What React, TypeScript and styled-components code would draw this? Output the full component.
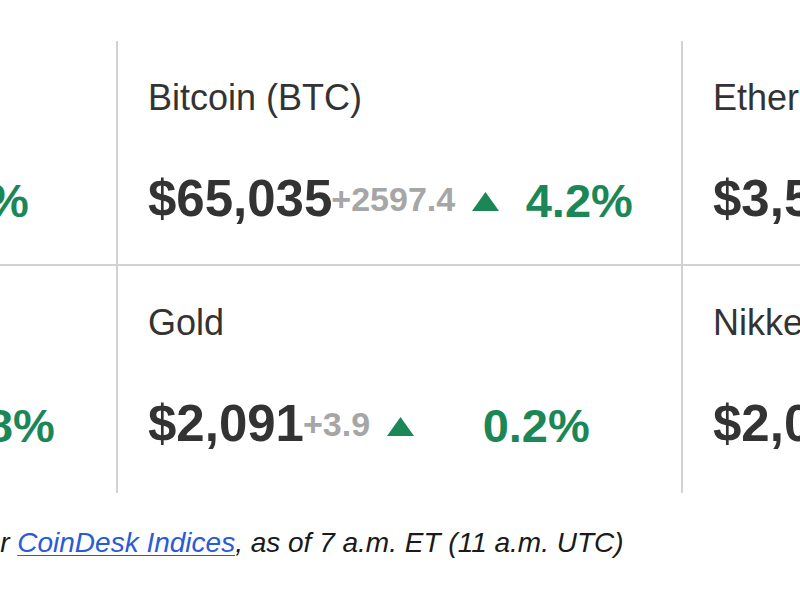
import React from "react";
import styled, { createGlobalStyle } from "styled-components";

const Global = createGlobalStyle`
  html, body {
    margin: 0;
    padding: 0;
    background: #ffffff;
    overflow: hidden;
  }
  body {
    font-family: "Liberation Sans", Arial, Helvetica, sans-serif;
    color: #333333;
  }
`;

const Page = styled.div`
  width: 800px;
  height: 600px;
  overflow: hidden;
  padding-top: 41px;
  box-sizing: border-box;
`;

const Grid = styled.div`
  display: grid;
  grid-template-columns: repeat(3, 565px);
  grid-template-rows: 225px 227px;
  margin-left: -449px;
  width: 1695px;
`;

const Cell = styled.div<{ $top?: boolean }>`
  box-sizing: border-box;
  border-left: 2px solid #d2d2d2;
  border-bottom: ${(p) => (p.$top ? "2px solid #d2d2d2" : "none")};
  padding: 36px 0 0 30px;
  white-space: nowrap;
  overflow: hidden;
`;

const Label = styled.div`
  font-size: 36px;
  line-height: 41px;
  color: #333333;
`;

const PriceRow = styled.div`
  display: flex;
  align-items: center;
  margin-top: 55px;
  height: 51px;
`;

const Price = styled.span`
  font-size: 51px;
  line-height: 51px;
  font-weight: 700;
  color: #333333;
`;

const Change = styled.span`
  font-size: 34px;
  line-height: 34px;
  font-weight: 700;
  color: #a6a6a6;
  margin-left: -1px;
`;

const Arrow = styled.svg`
  width: 27px;
  height: 19px;
  margin-left: 17px;
  margin-top: 6px;
  flex: none;
`;

const Pct = styled.span<{ $gap: number }>`
  font-size: 47px;
  line-height: 47px;
  font-weight: 700;
  color: #1b8756;
  margin-left: ${(p) => p.$gap}px;
  margin-top: 3px;
`;

const Footer = styled.p`
  margin: 34px 0 0 -31px;
  font-size: 28px;
  line-height: 32px;
  font-style: italic;
  color: #1a1a1a;
  white-space: nowrap;
`;

const Link = styled.a`
  color: #2a5bd7;
  text-decoration: underline;
  text-decoration-thickness: 1px;
  text-underline-offset: 3px;
`;

type Item = {
  label: string;
  price: string;
  change: string;
  pct: string;
  gap: number;
};

const rows: Item[][] = [
  [
    { label: "CoinDesk 20 (CD20)", price: "2,356", change: "+98.3", pct: "4.2%", gap: 82 },
    { label: "Bitcoin (BTC)", price: "$65,035", change: "+2597.4", pct: "4.2%", gap: 26.5 },
    { label: "Ethereum (ETH)", price: "$3,535", change: "+154.6", pct: "4.6%", gap: 26 },
  ],
  [
    { label: "S&P 500", price: "5,137", change: "+40.8", pct: "0.8%", gap: 108 },
    { label: "Gold", price: "$2,091", change: "+3.9", pct: "0.2%", gap: 68.5 },
    { label: "Nikkei 225", price: "$2,021", change: "+8.1", pct: "0.4%", gap: 40 },
  ],
];

const UpArrow: React.FC = () => (
  <Arrow viewBox="0 0 27 19" aria-hidden="true">
    <polygon points="13.5,0 27,19 0,19" fill="#1b8756" />
  </Arrow>
);

export default function App() {
  return (
    <>
      <Global />
      <Page>
        <Grid>
          {rows.map((row, ri) =>
            row.map((it) => (
              <Cell key={it.label} $top={ri === 0}>
                <Label>{it.label}</Label>
                <PriceRow>
                  <Price>{it.price}</Price>
                  <Change>{it.change}</Change>
                  <UpArrow />
                  <Pct $gap={it.gap}>{it.pct}</Pct>
                </PriceRow>
              </Cell>
            ))
          )}
        </Grid>
        <Footer>
          per <Link href="#">CoinDesk Indices</Link>, as of 7 a.m. ET (11 a.m. UTC)
        </Footer>
      </Page>
    </>
  );
}
